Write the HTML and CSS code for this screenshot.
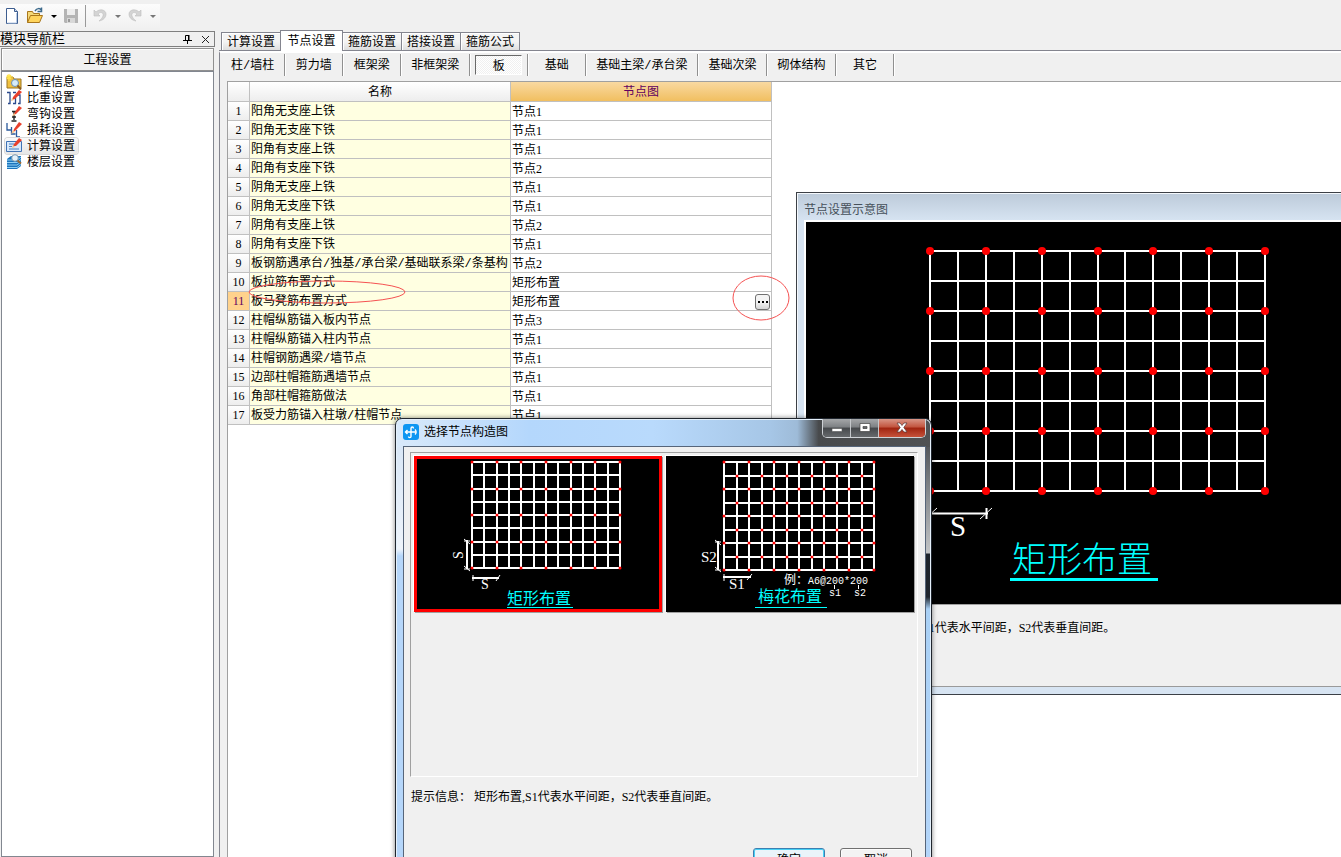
FILE: index.html
```html
<!DOCTYPE html>
<html lang="zh-CN">
<head>
  <meta charset="UTF-8" />
  <meta name="viewport" content="width=device-width, initial-scale=1.0"/>
  <title>工程设置 - 节点设置</title>
  <link rel="stylesheet" href="styles.css">
</head>
<body>

<div class="app">
  <div class="toolbar">
    <div class="tools">
      <button class="tool" aria-label="新建">
        <svg width="16" height="18" viewBox="0 0 16 18"><path d="M2.5 1.5h8l3 3v12h-11z" fill="#fff" stroke="#3d5d8f"/><path d="M10.500 1.500v3h3" fill="#c8d8ee" stroke="#3d5d8f"/><path d="M12.500 6v10h-9" fill="none" stroke="#b8cbe6"/></svg>
      </button>
      <button class="tool wide" aria-label="打开">
        <svg width="18" height="18" viewBox="0 0 18 18"><path d="M1.500 15.500v-11h5l1 2h6v3" fill="#f5d978" stroke="#a8761c"/><path d="M1.500 15.500l3-7h12l-3 7z" fill="#ffd45c" stroke="#a8761c"/><path d="M9 4c2-3 5-3 6-1M15.500 .500v4h-4" fill="none" stroke="#3c6a8c" stroke-width="1.500"/></svg>
        <span class="caret"></span>
      </button>
      <button class="tool off" aria-label="保存" disabled>
        <svg width="16" height="18" viewBox="0 0 16 18"><path d="M1 2h14v14H2l-1-1z" fill="#b4b4b4"/><path d="M4 2h8v6H4z" fill="#ededed"/><path d="M4 11h8v5H4z" fill="#d8d8d8"/><path d="M5 12h2v3H5z" fill="#999"/></svg>
      </button>
      <span class="tool-sep"></span>
      <button class="tool wide off" aria-label="撤销" disabled>
        <svg width="16" height="18" viewBox="0 0 16 18"><path d="M2 3v6h6L6 7c3-3 6-1 5 2s-3 4-4 5c5-1 7-4 7-7 0-4-6-6-10-2z" fill="#d4d4d4" stroke="#bdbdbd" stroke-width=".6"/></svg>
        <span class="caret"></span>
      </button>
      <button class="tool wide off" aria-label="恢复" disabled>
        <svg width="16" height="18" viewBox="0 0 16 18"><path d="M14 3v6H8l2-2C7 4 4 6 5 9s3 4 4 5c-5-1-7-4-7-7 0-4 6-6 10-2z" fill="#d4d4d4" stroke="#bdbdbd" stroke-width=".6"/></svg>
        <span class="caret"></span>
      </button>
    </div>
  </div>

  <div class="columns">
    <aside class="nav">
      <div class="nav-title">
        <span>模块导航栏</span>
        <span class="nav-tools">
          <button aria-label="固定"><svg width="9" height="9" viewBox="0 0 9 9"><path d="M2.500 5V.500h3V5M0 5.500h9M4.500 6v3" fill="none" stroke="#000"/><path d="M5 0h1.500v5H5z"/></svg></button>
          <button aria-label="关闭"><svg width="9" height="9" viewBox="0 0 9 9"><path d="M1 1l7 7M8 1l-7 7" stroke="#222"/></svg></button>
        </span>
      </div>
      <button class="nav-head">工程设置</button>
      <ul class="nav-list">
        <li><a href="#"><svg width="16" height="16" viewBox="0 0 16 16"><path d="M1 3h6l1 2h7v9H1z" fill="#f0c040" stroke="#9a7420"/><path d="M3 0v7M0 3h7M1 1l4 4M5 1L1 5" stroke="#ffe24a" stroke-width="1.200"/><circle cx="9" cy="9" r="3.500" fill="#d6ecfa" stroke="#6b8eb0"/><path d="M11.500 11.500l3.500 4" stroke="#8a5a20" stroke-width="2"/></svg>工程信息</a></li>
        <li><a href="#"><svg width="16" height="16" viewBox="0 0 16 16"><path d="M1 2.500h3v11H2M7 2.500h3M9.500 8v5.500H7M12 5h2v8.500h-2" fill="none" stroke="#2b4a8c" stroke-width="1.300"/><path d="M6 10l1-3 6-7 3 2-7 7z" fill="#e8402c"/><path d="M5 11l1-3 2 2z" fill="#f3c28c"/></svg>比重设置</a></li>
        <li><a href="#"><svg width="16" height="16" viewBox="0 0 16 16"><path d="M6 5.500h4M8 5v9M5.500 15h5M6 11h4" fill="none" stroke="#222" stroke-width="1.400"/><path d="M8 8l1-2 4-6 3 2-6 6z" fill="#e8402c"/><path d="M6 10l2-3 2 2z" fill="#f3c28c"/></svg>弯钩设置</a></li>
        <li><a href="#"><svg width="16" height="16" viewBox="0 0 16 16"><path d="M1 1v7h4M5.500 5v7h4M10.500 8v7H14" fill="none" stroke="#2b5a9c" stroke-width="1.300"/><path d="M7 10l1-3 5-7 3 2-7 7z" fill="#e8402c"/><path d="M5 12l2-4 2 2z" fill="#f3c28c"/></svg>损耗设置</a></li>
        <li><a href="#" class="current"><svg width="16" height="16" viewBox="0 0 16 16"><path d="M.500 3.500h15v10H.500z" fill="#d8e9fb" stroke="#3f72b5"/><path d="M3 6h5M3 8.500h3M3 11h10" stroke="#4a80c0"/><path d="M7 8l1-2 5-6 3 2-6 6z" fill="#e8402c"/><path d="M6 10l1-3 2 2z" fill="#f3c28c"/></svg>计算设置</a></li>
        <li><a href="#"><svg width="16" height="16" viewBox="0 0 16 16"><path d="M1 5l4-3h10v10l-4 3H1z" fill="#1d75bd"/><path d="M1 6h10l4-3M1 8.500h10l4-3M1 11h10l4-3M1 13.500h10l4-3" fill="none" stroke="#8fd0f5"/><circle cx="9" cy="4" r="3.300" fill="#e6f3fb" stroke="#7b98b0"/><path d="M11.500 6.500l3.500 3" stroke="#9a6a35" stroke-width="2"/></svg>楼层设置</a></li>
      </ul>
    </aside>

    <main class="main">
      <div class="tabs" role="tablist">
        <button class="tab" role="tab">计算设置</button>
        <button class="tab active" role="tab" aria-selected="true">节点设置</button>
        <button class="tab" role="tab">箍筋设置</button>
        <button class="tab" role="tab">搭接设置</button>
        <button class="tab" role="tab">箍筋公式</button>
      </div>
      <div class="page">
        <div class="kinds">
          <button>柱/墙柱</button>
          <button>剪力墙</button>
          <button>框架梁</button>
          <button>非框架梁</button>
          <button class="pressed"><span>板</span></button>
          <button>基础</button>
          <button>基础主梁/承台梁</button>
          <button>基础次梁</button>
          <button>砌体结构</button>
          <button>其它</button>
        </div>
        <div class="sheet">
          <table class="nodes">
            <colgroup><col class="c-num"><col class="c-name"><col class="c-node"></colgroup>
            <thead><tr><th></th><th>名称</th><th class="hot">节点图</th></tr></thead>
            <tbody>
              <tr><th>1</th><td>阳角无支座上铁</td><td>节点1</td></tr>
              <tr><th>2</th><td>阳角无支座下铁</td><td>节点1</td></tr>
              <tr><th>3</th><td>阳角有支座上铁</td><td>节点1</td></tr>
              <tr><th>4</th><td>阳角有支座下铁</td><td>节点2</td></tr>
              <tr><th>5</th><td>阴角无支座上铁</td><td>节点1</td></tr>
              <tr><th>6</th><td>阴角无支座下铁</td><td>节点1</td></tr>
              <tr><th>7</th><td>阴角有支座上铁</td><td>节点2</td></tr>
              <tr><th>8</th><td>阴角有支座下铁</td><td>节点1</td></tr>
              <tr><th>9</th><td>板钢筋遇承台/独基/承台梁/基础联系梁/条基构</td><td>节点2</td></tr>
              <tr><th>10</th><td>板拉筋布置方式</td><td>矩形布置</td></tr>
              <tr><th class="hot">11</th><td>板马凳筋布置方式</td><td><div class="edit">矩形布置<button class="more" aria-label="选择"><i></i><i></i><i></i></button></div></td></tr>
              <tr><th>12</th><td>柱帽纵筋锚入板内节点</td><td>节点3</td></tr>
              <tr><th>13</th><td>柱帽纵筋锚入柱内节点</td><td>节点1</td></tr>
              <tr><th>14</th><td>柱帽钢筋遇梁/墙节点</td><td>节点1</td></tr>
              <tr><th>15</th><td>边部柱帽箍筋遇墙节点</td><td>节点1</td></tr>
              <tr><th>16</th><td>角部柱帽箍筋做法</td><td>节点1</td></tr>
              <tr><th>17</th><td>板受力筋锚入柱墩/柱帽节点</td><td>节点1</td></tr>
            </tbody>
          </table>
          <svg class="marks" width="570" height="250" viewBox="0 0 570 250">
            <ellipse cx="99" cy="210" rx="78" ry="11"/>
            <ellipse cx="533" cy="216" rx="28" ry="22"/>
          </svg>
        </div>
      </div>
    </main>
  </div>
</div>

<section class="preview">
  <h2>节点设置示意图</h2>
  <div class="preview-body">
    <svg class="drawing" height="383">
      <g data-x="124" data-y="29" data-w="335" data-h="240" data-dot="4"></g>
      <path d="M124 291.500h58M180.500 286v11" stroke="#fff" stroke-width="2"/>
      <path d="M119 297l12-11M174 297l12-11" stroke="#fff"/>
      <text class="dim" x="144" y="314" font-size="29">S</text>
      <text class="cap big" x="206" y="350" font-size="35">矩形布置</text>
      <path d="M204 357.500h148" stroke="#0ff" stroke-width="3"/>
    </svg>
    <p>提示信息： 矩形布置,S1代表水平间距，S2代表垂直间距。</p>
  </div>
</section>

<section class="dialog" role="dialog" aria-labelledby="dlg-title">
  <header>
    <svg width="16" height="16" viewBox="0 0 16 16"><rect width="16" height="16" rx="3" fill="#0d96f2"/><path d="M8 12.500V4.500c0-2 2.500-2 2.500 0M8 12.500c0 1.500-2.500 1.500-2.500 0M4.500 6L2.500 8l2 2M3 8h10M12 5.500c1.500 1.500 1.500 3.500 0 5" fill="none" stroke="#fff" stroke-width="1.400"/></svg>
    <h2 id="dlg-title">选择节点构造图</h2>
    <div class="winbtns">
      <button aria-label="最小化"><svg width="12" height="12" viewBox="0 0 12 12"><rect x="1" y="6.500" width="10" height="3" fill="#fff" stroke="#555"  stroke-width=".6"/></svg></button>
      <button aria-label="最大化"><svg width="12" height="12" viewBox="0 0 12 12"><path d="M1 1.500h10v8H1zM4 4.500v2h4v-2z" fill="#fff" fill-rule="evenodd" stroke="#444" stroke-width=".7"/></svg></button>
      <button class="close" aria-label="关闭"><svg width="14" height="12" viewBox="0 0 14 12"><path d="M2 1h3l2 2.500L9 1h3L8.800 5.500 12 10H9L7 7.500 5 10H2l3.200-4.500z" fill="#fff" stroke="#533" stroke-width=".7"/></svg></button>
    </div>
  </header>
  <div class="client">
    <div class="choices">
      <button class="thumb chosen" aria-label="矩形布置">
        <svg width="242" height="150" viewBox="0 0 242 150">
          <g data-x="55" data-y="3" data-w="148" data-h="106" data-dot="1.5"></g>
          <path d="M50 81v29M55 119h27" stroke="#fff" stroke-width="2"/>
          <path d="M47 80l6 5M47 107l6 5M56 116v6M79 122l4-6M47 110h6M47 82h6" stroke="#fff"/>
          <text class="dim" x="-100" y="46" font-size="14" transform="rotate(-90)">S</text>
          <text class="dim" x="64" y="130" font-size="14">S</text>
          <text class="cap" x="90" y="145" font-size="16">矩形布置</text>
          <path d="M90 148.500h66" stroke="#0ff"/>
        </svg>
      </button>
      <button class="thumb" aria-label="梅花布置">
        <svg width="242" height="150" viewBox="0 0 242 150">
          <g data-x="55" data-y="3" data-w="150" data-h="108" data-dot="1.5" data-stagger="1"></g>
          <path d="M49 82v29M54 118h28" stroke="#fff" stroke-width="2"/>
          <path d="M46 81l6 5M46 108l6 5M55 115v7M78 121l5-6M46 111h6M46 83h6" stroke="#fff"/>
          <text class="dim" x="32" y="103" font-size="15">S2</text>
          <text class="dim" x="60" y="130" font-size="15">S1</text>
          <text class="note" x="115" y="125" font-size="12">例：</text>
          <text class="note" x="139" y="125" font-size="10">A6@200*200</text>
          <text class="note" x="160" y="137" font-size="10">s1</text>
          <text class="note" x="185" y="137" font-size="10">s2</text>
          <path d="M165.500 126v4M189.500 126v4" stroke="#fff"/>
          <text class="cap" x="89" y="143" font-size="16">梅花布置</text>
          <path d="M86 148.500h72" stroke="#0ff"/>
        </svg>
      </button>
    </div>
    <p>提示信息： 矩形布置,S1代表水平间距，S2代表垂直间距。</p>
    <div class="actions">
      <button class="ok">确定</button>
      <button>取消</button>
    </div>
  </div>
</section>

<script>
  // rebar grid: 12 x 8 cells, a dot on every second crossing
  document.querySelectorAll("g[data-dot]").forEach(g => {
    const d = g.dataset;
    const x0 = +d.x, y0 = +d.y, w = +d.w, h = +d.h, r = +d.dot;
    let lines = "", dots = "";
    for (let i = 0; i <= 12; i++) {
      lines += `M${x0 + Math.round(w * i / 12)} ${y0 - 1}v${h + 2}`;
    }
    for (let j = 0; j <= 8; j++) {
      lines += `M${x0 - 1} ${y0 + Math.round(h * j / 8)}h${w + 2}`;
      for (let i = 0; i <= 12; i++) {
        const even = i % 2 === 0 && j % 2 === 0;
        const odd = d.stagger && i % 2 === 1 && j % 2 === 1;
        if (even || odd) {
          const x = x0 + Math.round(w * i / 12), y = y0 + Math.round(h * j / 8);
          dots += `<circle cx="${x}" cy="${y}" r="${r}"/>`;
        }
      }
    }
    g.innerHTML = `<path d="${lines}" stroke="#fff" stroke-width="2" shape-rendering="crispEdges"/><g fill="red">${dots}</g>`;
  });
</script>

</body>
</html>
```

FILE: styles.css
```css
* {
  box-sizing: border-box;
}
body {
  margin: 0;
  height: 100vh;
  overflow: hidden;
  position: relative;
  background: #f0f0f0;
  color: #000;
  font: 12px/16px "Liberation Serif", "Noto Sans CJK SC", sans-serif;
}
button {
  font: inherit;
  color: inherit;
  padding: 0;
  margin: 0;
  border: 0;
  background: none;
}
h2, p, ul {
  margin: 0;
  padding: 0;
  font-size: 12px;
  font-weight: normal;
}
svg {
  display: block;
}
.app {
  height: 100%;
  display: flex;
  flex-direction: column;
}

/* toolbar */
.toolbar {
  height: 30px;
  padding-top: 4px;
}
.tools {
  display: flex;
  align-items: center;
  width: 160px;
  height: 24px;
  padding-left: 4px;
  gap: 6px;
  background: linear-gradient(#fcfcfc, #f1f1f1);
}
.tool {
  display: flex;
  align-items: center;
  gap: 7px;
}
.caret {
  border: 3px solid transparent;
  border-top-color: #000;
  border-bottom: 0;
}
.off .caret {
  border-top-color: #777;
}
.tool-sep {
  width: 1px;
  height: 22px;
  background: #999;
}

/* left navigation */
.columns {
  flex: 1;
  display: flex;
  min-height: 0;
}
.nav {
  width: 215px;
  display: flex;
  flex-direction: column;
}
.nav-title {
  display: flex;
  justify-content: space-between;
  align-items: center;
  height: 16px;
  margin-top: 1px;
  border: 1px solid #808080;
  border-left: 0;
  font-size: 13px;
  white-space: nowrap;
}
.nav-tools {
  display: flex;
  gap: 9px;
  padding-right: 4px;
}
.nav-head {
  height: 23px;
  margin: 1px 1px 0;
  border: 1px solid #909090;
  box-shadow: inset 1px 1px #fff;
}
.nav-list {
  flex: 1;
  margin: 0 1px;
  padding: 2px 3px;
  list-style: none;
  background: #fff;
  border: 1px solid #828790;
}
.nav-list li {
  display: flex;
}
.nav-list a {
  display: flex;
  gap: 5px;
  height: 16px;
  padding: 0 3px 0 1px;
  color: #000;
  text-decoration: none;
}
.nav-list .current {
  border-radius: 3px;
  background: linear-gradient(#fafafa, #e6e6e6);
  box-shadow: 0 0 0 1px #d9d9d9;
}

/* tabs */
.main {
  flex: 1;
  min-width: 0;
  margin-left: 4px;
  display: flex;
  flex-direction: column;
}
.tabs {
  display: flex;
  align-items: flex-end;
  height: 21px;
  padding-left: 2px;
  border-bottom: 1px solid #84858f;
}
.tab {
  width: 59px;
  height: 18px;
  border: 1px solid #84858f;
  border-left-width: 0;
  border-bottom: 0;
  background: linear-gradient(#f4f4f4 50%, #dedede);
  box-shadow: inset 1px 1px #fff;
}
.tab:first-child {
  border-left-width: 1px;
  border-right-width: 0;
}
.tab.active {
  width: 63px;
  height: 21px;
  margin-bottom: -1px;
  border-left-width: 1px;
  background: #fff;
}
.page {
  flex: 1;
  display: flex;
  flex-direction: column;
  min-height: 0;
  border-left: 1px solid #84858f;
  border-top: 2px solid #fff;
}
.kinds {
  display: flex;
  padding: 1px 0 5px 1px;
  font-family: "Liberation Mono", "Noto Sans CJK SC", monospace;
}
.kinds button {
  min-width: 58px;
  height: 22px;
  padding: 2px 10px 0;
  border-right: 1px solid #909090;
  box-shadow: 1px 0 #fff;
}
.kinds .pressed {
  padding: 0 5px;
}
.pressed span {
  display: block;
  height: 20px;
  padding-top: 3px;
  background: repeating-conic-gradient(#fff 0 25%, #f0f0f0 0 50%) 0 0 / 2px 2px;
  border: 1px solid #696969;
  border-right-color: #fff;
  border-bottom-color: #fff;
}

/* node table */
.sheet {
  flex: 1;
  position: relative;
  margin-left: 7px;
  background: #fff;
  border: 1px solid #a0a0a0;
  border-right: 0;
  border-bottom: 0;
}
.nodes {
  width: 544px;
  table-layout: fixed;
  border-collapse: separate;
  border-spacing: 0;
}
.c-num {
  width: 22px;
}
.nodes th, .nodes td {
  height: 19px;
  padding: 0 1px;
  border-right: 1px solid #c0c0c0;
  border-bottom: 1px solid #c0c0c0;
  font-weight: normal;
  line-height: 18px;
  text-align: left;
  white-space: nowrap;
  overflow: hidden;
}
.nodes th {
  text-align: center;
  background: linear-gradient(#fff, #ededed);
}
.nodes thead th {
  height: 20px;
}
.nodes td {
  padding-top: 2px;
  line-height: 16px;
}
.nodes td:nth-child(2) {
  background: #ffffe1;
  font-family: "Liberation Mono", "Noto Sans CJK SC", monospace;
}
.nodes thead .hot {
  color: #600060;
  background: linear-gradient(#f9d9a1, #f1bf60);
}
.nodes tbody .hot {
  color: #600060;
  background: #ffd28c;
}
.edit {
  display: flex;
  justify-content: space-between;
  align-items: center;
  height: 16px;
}
.more {
  display: flex;
  justify-content: center;
  align-items: center;
  gap: 2px;
  width: 15px;
  height: 16px;
  border: 1px solid #707070;
  border-radius: 3px;
  background: linear-gradient(#f4f4f4 50%, #d5d5d5);
}
.more i {
  width: 2px;
  height: 2px;
  background: #000;
}
.marks {
  position: absolute;
  left: 0;
  top: 0;
  pointer-events: none;
  fill: none;
  stroke: #f55252;
}

/* node preview window */
.preview {
  position: absolute;
  left: 796px;
  right: 0;
  top: 192px;
  padding: 0 0 7px 7px;
  border: 1px solid #3c4046;
  border-right: 0;
  background: linear-gradient(#bccad9, #d7e4f2 28px);
  box-shadow: inset 1px 1px #f4f8fc;
}
.preview h2 {
  height: 27px;
  padding-top: 9px;
  color: #46505a;
}
.preview-body {
  border: 2px solid #fff;
  border-right: 0;
  border-bottom: 1px solid #9a9a9a;
  background: #f0f0f0;
}
.drawing {
  width: 100%;
  background: #000;
  border-bottom: 1px solid #a0a0a0;
}
.preview p {
  height: 81px;
  padding: 15px 0 0 2px;
  white-space: nowrap;
}
.dim {
  fill: #fff;
  font-family: "Liberation Serif", serif;
}
.cap {
  fill: #0ff;
  font-family: "Noto Sans CJK SC", sans-serif;
}
.cap.big {
  font-weight: 300;
}
.note {
  fill: #fff;
  font-family: "Liberation Mono", "Noto Sans CJK SC", monospace;
}

/* choose dialog */
.dialog {
  position: absolute;
  left: 395px;
  top: 418px;
  width: 537px;
  padding: 0 5px 7px 7px;
  border: 1px solid #20262e;
  border-radius: 7px 7px 0 0;
  box-shadow: inset 0 0 0 1px #e4f0fb, 0 0 5px rgba(0, 0, 0, .5);
  background:
    linear-gradient(90deg, #d9e9fa, #b4d7fc 25%, #b9dafc 48%, #a6c6e6 70%, #9ebbd8 75%, #484a4c 79%, #505254 100%) 0 0 / 100% 28px no-repeat,
    linear-gradient(#55585c 28px, #8b8f93 80px, #c2c4c6 134px, #1d232b 135px, #20262e 178px, #a9d0f5 190px, #b5d6fa) 100% 0 / 50% 100% no-repeat,
    linear-gradient(#d3e3f5, #eef4fb 130px, #b5d6fa 137px);
}
.dialog header {
  display: flex;
  height: 27px;
  padding-top: 5px;
  gap: 5px;
}
.dialog h2 {
  flex: 1;
}
.winbtns {
  display: flex;
  height: 19px;
  margin-top: -5px;
  border: 1px solid #ced2d6;
  border-top: 0;
  border-radius: 0 0 5px 5px;
  overflow: hidden;
}
.winbtns button {
  display: flex;
  justify-content: center;
  align-items: center;
  width: 28px;
  border-right: 1px solid #c5c8cb;
  background: linear-gradient(#a5a7a9, #7d8083 45%, #46494c 50%, #66696c);
}
.winbtns .close {
  width: 46px;
  border-right: 0;
  background: linear-gradient(#d99586, #c2543e 45%, #a02410 50%, #c6523a);
}
.client {
  padding: 5px 7px 10px 6px;
  background: #f0f0f0;
  border: 1px solid #56657a;
}
.choices {
  display: flex;
  align-items: flex-start;
  gap: 4px;
  height: 325px;
  padding: 3px;
  border: 1px solid #a0a0a0;
  border-right-color: #fff;
  border-bottom-color: #fff;
}
.thumb {
  border: 3px solid #000;
  background: #000;
  box-shadow: 1px 1px #a0a0a0, -1px -1px #fff;
}
.thumb.chosen {
  border-color: #f00;
}
.client p {
  padding: 12px 0 0 1px;
}
.actions {
  display: flex;
  justify-content: flex-end;
  gap: 15px;
  padding: 43px 6px 0 0;
}
.actions button {
  width: 72px;
  height: 24px;
  border: 1px solid #707070;
  border-radius: 3px;
  background: linear-gradient(#f3f3f3 50%, #d5d5d5);
  box-shadow: inset 0 0 0 1px #fcfcfc;
}
.actions .ok {
  border-color: #3c7fb1;
  background: linear-gradient(#eaf4fa 50%, #cfe3ee);
  box-shadow: inset 0 0 0 1px #48d1f5;
}
```
